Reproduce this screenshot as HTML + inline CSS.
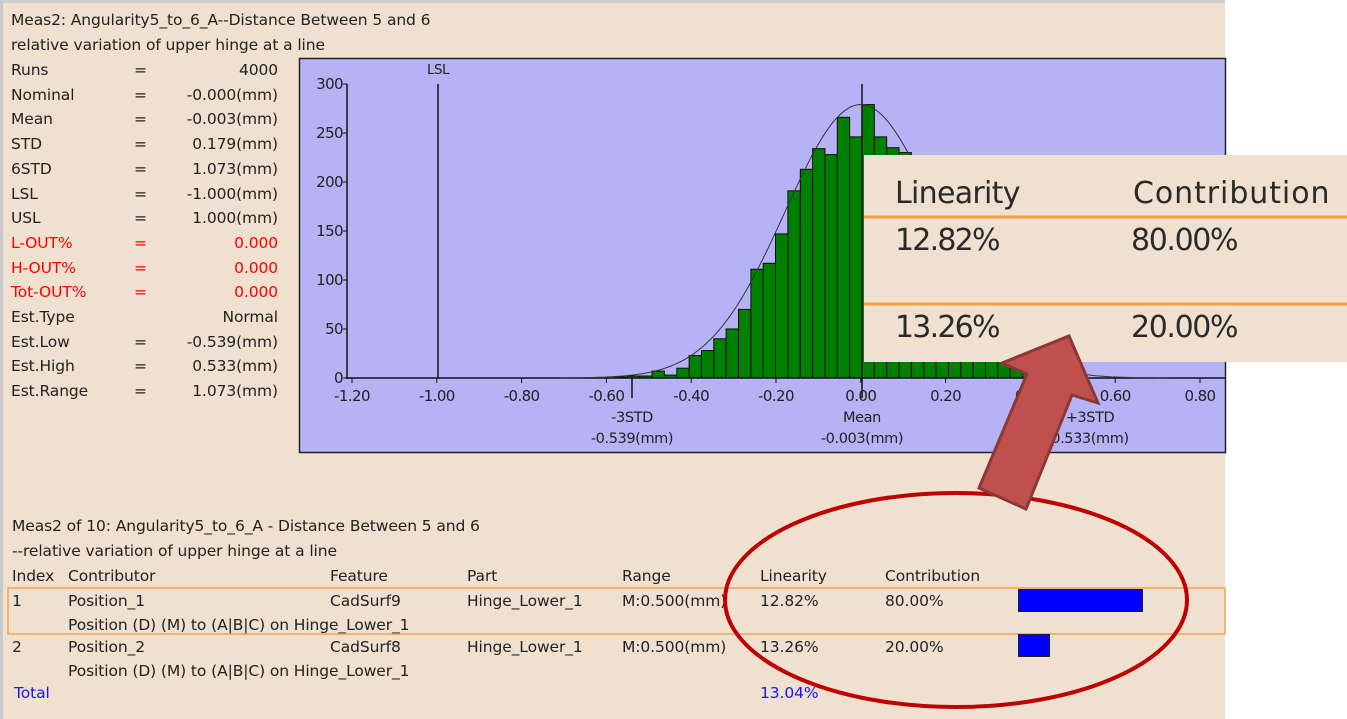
<!DOCTYPE html>
<html><head><meta charset="utf-8"><style>
html,body{margin:0;padding:0;width:1347px;height:719px;overflow:hidden;background:#fff;font-family:"DejaVu Sans",sans-serif;}
#panel{position:absolute;left:0;top:0;width:1225px;height:719px;background:#EFE0D0;border-top:3px solid #cfcfcf;border-left:3px solid #c8c8c8;box-sizing:border-box;}
.t{position:absolute;font-size:15.5px;color:#222;white-space:nowrap;line-height:16px;font-family:"DejaVu Sans",sans-serif;letter-spacing:-0.1px;}
.r{color:#ff0000;}
</style></head><body>
<div id="panel"></div>
<div class="t" style="left:11px;top:12px">Meas2: Angularity5_to_6_A--Distance Between 5 and 6</div>
<div class="t" style="left:11px;top:37px">relative variation of upper hinge at a line</div>
<div id="stats"></div>

<svg width="1347" height="719" style="position:absolute;left:0;top:0" id="svg">
<rect x="299.5" y="58.5" width="926" height="394" fill="#B5B3F5" stroke="#222" stroke-width="1.5"/>
<g id="bars"></g>
<g stroke="#111" stroke-width="1.5" fill="none">
<line x1="347" y1="84" x2="347" y2="379"/>
<line x1="347" y1="378" x2="1225" y2="378"/>
<line x1="438" y1="84" x2="438" y2="378"/>
<line x1="862" y1="84" x2="862" y2="398"/>
<line x1="632" y1="378" x2="632" y2="398"/>
<line x1="1087" y1="378" x2="1087" y2="398"/>
</g>
<path id="curve" fill="none" stroke="#333" stroke-width="1"/>
<g id="ax" font-size="15" fill="#222" font-family="DejaVu Sans, sans-serif" letter-spacing="-0.6"></g>
<text x="438" y="74" font-size="13.5" text-anchor="middle" fill="#222" font-family="DejaVu Sans" letter-spacing="-0.5">LSL</text>
<g font-size="14.5" fill="#222" text-anchor="middle" font-family="DejaVu Sans" letter-spacing="-0.4">
<text x="632" y="422">-3STD</text><text x="632" y="443">-0.539(mm)</text>
<text x="862" y="422">Mean</text><text x="862" y="443">-0.003(mm)</text>
<text x="1090" y="422">+3STD</text><text x="1090" y="443">0.533(mm)</text>
</g>

<g font-size="15.5" fill="#222" font-family="DejaVu Sans" letter-spacing="-0.1">
<text x="12" y="531">Meas2 of 10: Angularity5_to_6_A - Distance Between 5 and 6</text>
<text x="12" y="556">--relative variation of upper hinge at a line</text>
<text x="12" y="581">Index</text><text x="68" y="581">Contributor</text><text x="330" y="581">Feature</text><text x="467" y="581">Part</text><text x="622" y="581">Range</text><text x="760" y="581">Linearity</text><text x="885" y="581">Contribution</text>
<text x="12" y="606">1</text><text x="68" y="606">Position_1</text><text x="330" y="606">CadSurf9</text><text x="467" y="606">Hinge_Lower_1</text><text x="622" y="606">M:0.500(mm)</text><text x="760" y="606">12.82%</text><text x="885" y="606">80.00%</text>
<text x="68" y="630">Position (D) (M) to (A|B|C) on Hinge_Lower_1</text>
<text x="12" y="652">2</text><text x="68" y="652">Position_2</text><text x="330" y="652">CadSurf8</text><text x="467" y="652">Hinge_Lower_1</text><text x="622" y="652">M:0.500(mm)</text><text x="760" y="652">13.26%</text><text x="885" y="652">20.00%</text>
<text x="68" y="676">Position (D) (M) to (A|B|C) on Hinge_Lower_1</text>
<text x="14" y="698" fill="#1515ff">Total</text><text x="760" y="698" fill="#1515ff">13.04%</text>
</g>
<rect x="8" y="588" width="1217" height="46" fill="none" stroke="#F5A050" stroke-width="1.5"/>
<rect x="1018.5" y="589.5" width="124" height="22" fill="#0000FF" stroke="#222"/>
<rect x="1018.5" y="634.5" width="31" height="22" fill="#0000FF" stroke="#222"/>

<rect x="864" y="155" width="483" height="207" fill="#EFE0D0"/>
<line x1="864" y1="217" x2="1347" y2="217" stroke="#F5A040" stroke-width="3"/>
<line x1="864" y1="304" x2="1347" y2="304" stroke="#F5A040" stroke-width="3"/>
<g font-size="30" fill="#2a2a2a" font-family="DejaVu Sans" letter-spacing="-0.5">
<text x="895" y="203" textLength="125">Linearity</text><text x="1133" y="203" textLength="196">Contribution</text>
<text x="895" y="250" textLength="105">12.82%</text><text x="1131" y="250" textLength="107">80.00%</text>
<text x="895" y="337" textLength="105">13.26%</text><text x="1131" y="337" textLength="107">20.00%</text>
</g>

<ellipse cx="956" cy="600" rx="231" ry="107" fill="none" stroke="#C00000" stroke-width="4"/>
<polygon points="1069,336 1098,403 1072,395 1026,509 979,488 1027,374 1002,363" fill="#C0504D" stroke="#8C3836" stroke-width="3" stroke-linejoin="miter"/>
</svg>
<script>
var st=[["Runs","=","4000"],["Nominal","=","-0.000(mm)"],["Mean","=","-0.003(mm)"],["STD","=","0.179(mm)"],["6STD","=","1.073(mm)"],["LSL","=","-1.000(mm)"],["USL","=","1.000(mm)"],["L-OUT%","=","0.000",1],["H-OUT%","=","0.000",1],["Tot-OUT%","=","0.000",1],["Est.Type","","Normal"],["Est.Low","=","-0.539(mm)"],["Est.High","=","0.533(mm)"],["Est.Range","=","1.073(mm)"]];
var h="";st.forEach(function(s,i){var y=62+i*24.7;var c=s[3]?" r":"";
h+='<div class="t'+c+'" style="left:11px;top:'+y+'px">'+s[0]+'</div><div class="t'+c+'" style="left:134px;top:'+y+'px">'+s[1]+'</div><div class="t'+c+'" style="right:1069px;top:'+y+'px">'+s[2]+'</div>';});
document.getElementById("stats").innerHTML=h;
var hs=[1,2,2,7,3,10,23,28,40,50,70,111,117,147,191,213,234,228,266,246,279,246,235,230,205,185,150,125,100,80,60,40,28,18,10,6,3,1];
var b="";hs.forEach(function(v,i){var x=615+i*12.35,hh=v*0.98;b+='<rect x="'+x.toFixed(1)+'" y="'+(378-hh).toFixed(1)+'" width="12.35" height="'+hh.toFixed(1)+'" fill="#008000" stroke="#0a0a0a" stroke-width="1"/>';});
document.getElementById("bars").innerHTML=b;
var p="";for(var x=560;x<=1170;x+=3){var u=(x-862)/424+0.003;var y=378-279*0.98*Math.exp(-u*u/(2*0.179*0.179));p+=(p?"L":"M")+x+","+y.toFixed(1);}
document.getElementById("curve").setAttribute("d",p);
var a="";["300","250","200","150","100","50","0"].forEach(function(t,i){var y=84+i*49;a+='<text x="343" y="'+(y+5)+'" text-anchor="end">'+t+'</text><line x1="343" y1="'+y+'" x2="347" y2="'+y+'" stroke="#111"/>';});
["-1.20","-1.00","-0.80","-0.60","-0.40","-0.20","0.00","0.20","0.40","0.60","0.80"].forEach(function(t,i){var x=352+i*84.8;a+='<text x="'+x+'" y="401" text-anchor="middle">'+t+'</text><line x1="'+x+'" y1="378" x2="'+x+'" y2="383" stroke="#111"/>';});
document.getElementById("ax").innerHTML=a;
</script>
</body></html>
